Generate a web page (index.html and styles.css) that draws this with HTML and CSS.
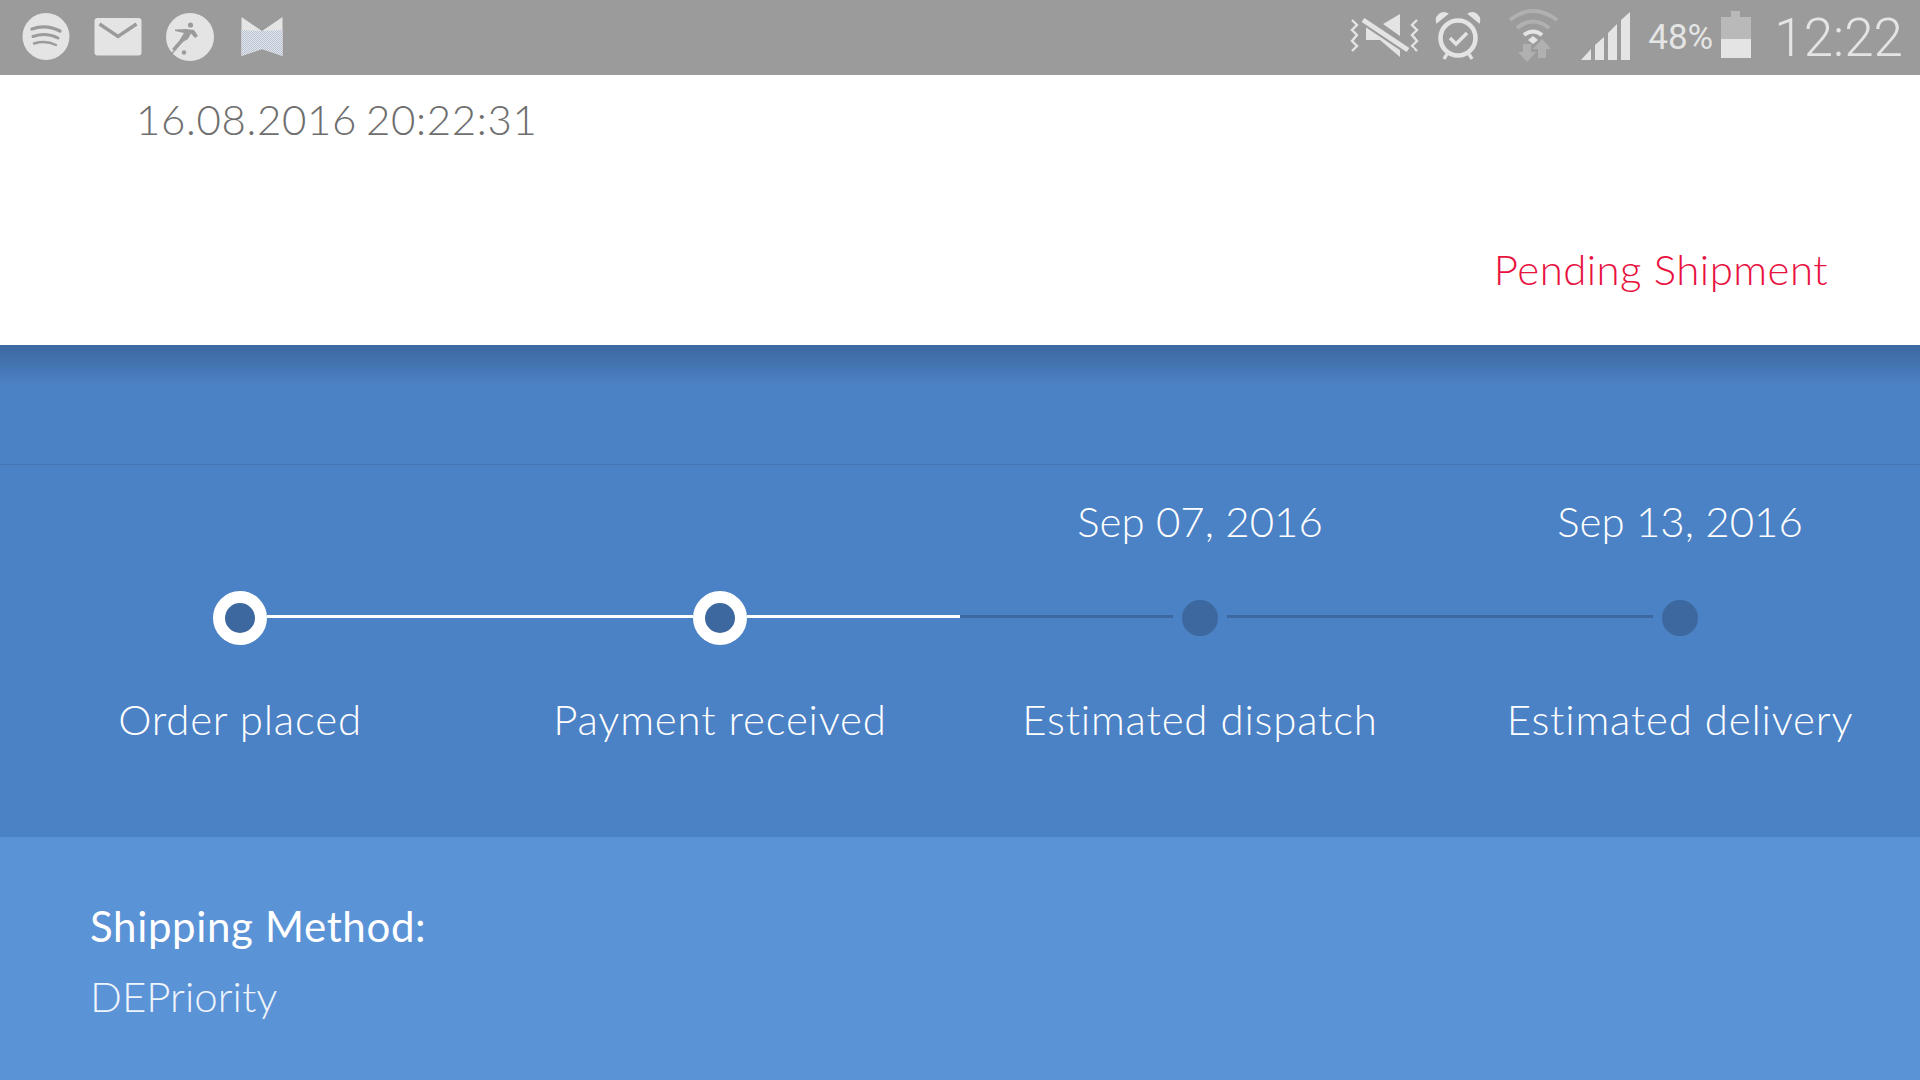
FILE: index.html
```html
<!DOCTYPE html>
<html lang="en">
<head>
    <meta charset="UTF-8">
    <meta name="viewport" content="width=device-width, initial-scale=1.0">
    <title>Order status</title>

    <link rel="stylesheet" href="styles.css">
</head>
<body>
    <header class="status-bar">
        <svg class="ic-spotify" width="48" height="75" viewBox="22 0 48 75">
            <circle cx="46" cy="36.5" r="23.5" fill="#e4e4e4"/>
            <g fill="none" stroke="#9b9b9b" stroke-linecap="round">
                <path d="M32 29 Q46 24 60 31" stroke-width="3.4"/>
                <path d="M33 36.5 Q46 32 58 38" stroke-width="3"/>
                <path d="M34 43.5 Q46 40 56 45" stroke-width="2.4"/>
            </g>
        </svg>
        <svg class="ic-mail" width="48" height="75" viewBox="94 0 48 75">
            <rect x="94.5" y="18" width="47" height="37.5" rx="3" fill="#e4e4e4"/>
            <path d="M99.5 24 L118 36.5 L136.5 24" fill="none" stroke="#9b9b9b" stroke-width="3.4"/>
        </svg>
        <svg class="ic-soccer" width="48" height="75" viewBox="166 0 48 75">
            <circle cx="190" cy="37" r="24" fill="#e4e4e4"/>
            <circle cx="190.500" cy="25" r="2.6" fill="#9b9b9b"/>
            <path d="M175 29.500 L186 29 L194 30 L198 36 L195 38 L191 33.500 L188 39 L183 42 L175 51 L172 49 L179 41 L184 33 L175 31 Z" fill="#9b9b9b"/>
            <path d="M170 56 L178 46" stroke="#9b9b9b" stroke-width="1.400"/>
            <circle cx="184" cy="52.500" r="2.200" fill="#9b9b9b"/>
        </svg>
        <svg class="ic-m" width="42" height="75" viewBox="241 0 42 75">
            <defs>
                <pattern id="mDots" width="2" height="2" patternUnits="userSpaceOnUse">
                    <rect width="2" height="2" fill="#e2e5ea"/>
                    <rect width="1" height="1" fill="#b9c3d4"/>
                    <rect x="1" y="1" width="1" height="1" fill="#b9c3d4"/>
                </pattern>
            </defs>
            <path d="M241.500 17 L262 31 L282.500 17 V56 L262 49 L241.500 56 Z" fill="#e4e4e4"/>
            <path d="M241.500 30 L262 42 L282.500 30 V56 L262 49 L241.500 56 Z M241.500 30 L262 31 L282.500 30 L262 42 Z" fill="url(#mDots)"/>
        </svg>

        <span class="spacer"></span>

        <svg class="ic-mute" width="71" height="75" viewBox="1351 0 71 75">
            <g fill="none" stroke="#e4e4e4" stroke-width="2.400">
                <path d="M1353 20 L1358 25 L1353 30 L1358 35 L1353 41 L1358 46 L1353 51"/>
                <path d="M1418 20 L1413 25 L1418 30 L1413 35 L1418 41 L1413 46 L1418 51"/>
            </g>
            <path d="M1401 14 V36 L1384 24 Z M1367 22 L1401 44 V57 L1381 40 H1367 Z" fill="#e4e4e4"/>
            <path d="M1360 17.300 L1413 52.700" stroke="#9b9b9b" stroke-width="9"/>
            <path d="M1364 20 L1409 50" stroke="#e4e4e4" stroke-width="5"/>
        </svg>
        <svg class="ic-alarm" width="46" height="75" viewBox="1435 0 46 75">
            <circle cx="1458" cy="38" r="17.500" fill="none" stroke="#e4e4e4" stroke-width="4.600"/>
            <path d="M1437 22 A7 7 0 0 1 1447 14 Z M1479 22 A7 7 0 0 0 1469 14 Z" fill="#e4e4e4" stroke="#e4e4e4" stroke-width="2"/>
            <path d="M1450 38 L1456 44 L1467 33" fill="none" stroke="#e4e4e4" stroke-width="3.400"/>
            <path d="M1447 54 L1444 59 M1469 54 L1472 59" stroke="#e4e4e4" stroke-width="3.400"/>
        </svg>
        <svg class="ic-wifi" width="52" height="75" viewBox="1507 0 52 75">
            <g fill="none" stroke-width="4">
                <path d="M1510 20 Q1533 2 1557 20" stroke="#b0b0b0"/>
                <path d="M1517 28 Q1533 15 1549 28" stroke="#b0b0b0"/>
                <path d="M1524 35 Q1533 28 1542 35" stroke="#e4e4e4"/>
            </g>
            <path d="M1528 40 L1533 36 L1538 40 L1533 44 Z" fill="#e4e4e4"/>
            <path d="M1523 44 H1531 V52 H1536 L1527 62 L1518 52 H1523 Z" fill="#b0b0b0"/>
            <path d="M1542 39 L1551 49 H1546 V58 H1538 V49 H1533 Z" fill="#b0b0b0"/>
        </svg>
        <svg class="ic-signal" width="50" height="75" viewBox="1581 0 50 75">
            <path d="M1581 60 L1591 49 V60 Z M1595 60 V45 L1604 37 V60 Z M1608 60 V33 L1617 24 V60 Z M1621 60 V20 L1630 12 V60 Z" fill="#e4e4e4"/>
        </svg>
        <span class="battery-text">48%</span>
        <svg class="ic-battery" width="30" height="75" viewBox="1722 0 30 75">
            <path d="M1732 11 H1741 V17 H1752 V39 H1722 V17 H1732 Z" fill="#b9b9b9"/>
            <rect x="1722" y="39" width="30" height="19" fill="#e4e4e4"/>
        </svg>
        <span class="clock">12:22</span>
    </header>

    <section class="order-head">
        <div class="order-date">16.08.2016 20:22:31</div>
        <div class="order-state">Pending Shipment</div>
    </section>

    <section class="tracking">
        <div class="tracking-top"></div>
        <div class="steps">
            <div class="step">
                <div class="step-date"></div>
                <div class="track">
                    <span class="line none"></span>
                    <span class="dot done"></span>
                    <span class="line on"></span>
                </div>
                <div class="step-label">Order placed</div>
            </div>
            <div class="step">
                <div class="step-date"></div>
                <div class="track">
                    <span class="line on"></span>
                    <span class="dot done"></span>
                    <span class="line on"></span>
                </div>
                <div class="step-label">Payment received</div>
            </div>
            <div class="step">
                <div class="step-date">Sep 07, 2016</div>
                <div class="track">
                    <span class="line"></span>
                    <span class="dot"></span>
                    <span class="line"></span>
                </div>
                <div class="step-label">Estimated dispatch</div>
            </div>
            <div class="step">
                <div class="step-date">Sep 13, 2016</div>
                <div class="track">
                    <span class="line"></span>
                    <span class="dot"></span>
                    <span class="line none"></span>
                </div>
                <div class="step-label">Estimated delivery</div>
            </div>
        </div>
    </section>

    <section class="shipping">
        <h3 class="shipping-title">Shipping Method:</h3>
        <div class="shipping-value">DEPriority</div>
    </section>
</body>
</html>
```

FILE: styles.css
```css
* {
    padding: 0;
    margin: 0;
    box-sizing: border-box;
}

body {
    background-color: #5b93d7;
    height: 1080px;
    overflow: hidden;
    display: flex;
    flex-direction: column;
    font-family: "Lato", "Liberation Sans", sans-serif;
    font-weight: 300;
}

/* status bar */
.status-bar {
    height: 75px;
    padding: 0 17px 0 22px;
    background-color: #9b9b9b;
    display: flex;
    align-items: center;
    flex-shrink: 0;
    color: #e4e4e4;
    font-family: "Roboto", sans-serif;
    font-weight: 300;
}

.spacer {
    flex: 1;
}

.ic-mail, .ic-soccer {
    margin-left: 24px;
}

.ic-m {
    margin-left: 27px;
}

.ic-alarm {
    margin-left: 14px;
}

.ic-wifi {
    margin-left: 26px;
}

.ic-signal {
    margin-left: 22px;
}

.battery-text {
    width: 65px;
    margin-left: 17px;
    font-size: 35px;
    font-weight: 400;
    white-space: nowrap;
}

.ic-battery {
    margin-left: 8px;
}

.clock {
    margin-left: 23px;
    font-size: 53px;
    white-space: nowrap;
}

/* order header */
.order-head {
    height: 270px;
    padding: 0 92px 0 136px;
    background-color: white;
    display: flex;
    flex-direction: column;
    flex-shrink: 0;
}

.order-date {
    margin-top: 17px;
    font-size: 42px;
    line-height: 54px;
    letter-spacing: 0.65px;
    word-spacing: -3px;
    color: #6e6e6e;
}

.order-state {
    margin-top: 96px;
    font-size: 42px;
    line-height: 54px;
    letter-spacing: 0.45px;
    text-align: right;
    color: #e8123f;
}

/* tracking */
.tracking {
    height: 492px;
    background-color: #4b81c5;
    display: flex;
    flex-direction: column;
    flex-shrink: 0;
}

.tracking-top {
    height: 120px;
    border-bottom: 1px solid #4575b3;
    background-image: linear-gradient(#3d689f, #4b81c5 40px);
    flex-shrink: 0;
}

.steps {
    flex: 1;
    display: grid;
    grid-template-columns: repeat(4, 480px);
}

.step {
    display: flex;
    flex-direction: column;
    align-items: center;
    color: white;
    font-size: 42px;
}

.step-date {
    height: 54px;
    margin-top: 29px;
    line-height: 54px;
}

.track {
    width: 100%;
    height: 54px;
    margin-top: 43px;
    display: flex;
    align-items: flex-start;
    justify-content: center;
}

.line {
    flex: 1;
    height: 3px;
    margin-top: 24px;
    background-color: #3d689f;
}

.line.on {
    background-color: white;
}

.line.none {
    background-color: transparent;
}

.dot {
    width: 36px;
    height: 36px;
    margin: 9px;
    border-radius: 50%;
    background-color: #3d689f;
    flex-shrink: 0;
}

.dot.done {
    width: 54px;
    height: 54px;
    margin: 0;
    border: 12px solid white;
}

.step-label {
    height: 54px;
    margin-top: 47px;
    line-height: 54px;
    letter-spacing: 0.8px;
    white-space: nowrap;
}

/* shipping */
.shipping {
    flex: 1;
    padding: 62px 90px 0;
    color: white;
}

.shipping-title {
    font-size: 42px;
    font-weight: 400;
    line-height: 54px;
    letter-spacing: 0.65px;
}

.shipping-value {
    margin-top: 16px;
    font-size: 42px;
    line-height: 54px;
    opacity: 0.9;
}
```
